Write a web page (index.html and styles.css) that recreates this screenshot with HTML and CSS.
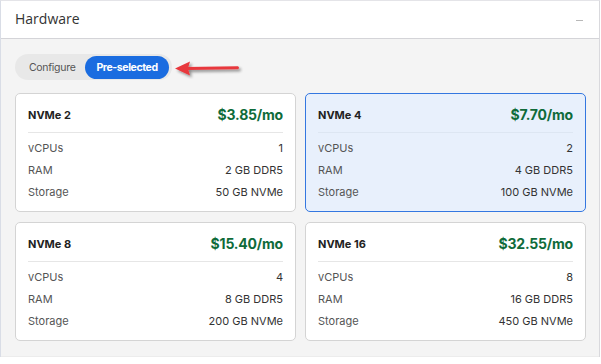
FILE: index.html
```html
<!DOCTYPE html>
<html>
<head>
<meta charset="utf-8">
<link rel="stylesheet" href="styles.css">
</head>
<body>
<div class="panel">
  <div class="panel-header">
    <span class="panel-title">Hardware</span>
    <span class="collapse"></span>
  </div>
  <div class="panel-body">
    <div class="toggle-row">
      <div class="toggle">
        <span class="tab">Configure</span>
        <span class="tab active">Pre-selected</span>
      </div>
      <svg class="arrow" width="72" height="20" viewBox="0 0 72 20">
        <defs>
          <filter id="sh" x="-20%" y="-50%" width="140%" height="200%">
            <feGaussianBlur in="SourceAlpha" stdDeviation="1.5"/>
            <feOffset dx="2" dy="2" result="b"/>
            <feComponentTransfer><feFuncA type="linear" slope="0.45"/></feComponentTransfer>
            <feMerge><feMergeNode/><feMergeNode in="SourceGraphic"/></feMerge>
          </filter>
        </defs>
        <g filter="url(#sh)">
          <path d="M14 8 L65 7.3 Q67 8.8 65 10.3 L14 11 Z" fill="#e8383d"/>
          <path d="M2 9.5 L17 2.5 L15 9.4 L17 16.5 Z" fill="#e8383d"/>
        </g>
      </svg>
    </div>
    <div class="grid">
      <div class="card">
        <div class="card-head"><span class="name">NVMe 2</span><span class="price">$3.85/mo</span></div>
        <div class="row"><span class="label">vCPUs</span><span class="value">1</span></div>
        <div class="row"><span class="label">RAM</span><span class="value">2 GB DDR5</span></div>
        <div class="row"><span class="label">Storage</span><span class="value">50 GB NVMe</span></div>
      </div>
      <div class="card selected">
        <div class="card-head"><span class="name">NVMe 4</span><span class="price">$7.70/mo</span></div>
        <div class="row"><span class="label">vCPUs</span><span class="value">2</span></div>
        <div class="row"><span class="label">RAM</span><span class="value">4 GB DDR5</span></div>
        <div class="row"><span class="label">Storage</span><span class="value">100 GB NVMe</span></div>
      </div>
      <div class="card">
        <div class="card-head"><span class="name">NVMe 8</span><span class="price">$15.40/mo</span></div>
        <div class="row"><span class="label">vCPUs</span><span class="value">4</span></div>
        <div class="row"><span class="label">RAM</span><span class="value">8 GB DDR5</span></div>
        <div class="row"><span class="label">Storage</span><span class="value">200 GB NVMe</span></div>
      </div>
      <div class="card">
        <div class="card-head"><span class="name">NVMe 16</span><span class="price">$32.55/mo</span></div>
        <div class="row"><span class="label">vCPUs</span><span class="value">8</span></div>
        <div class="row"><span class="label">RAM</span><span class="value">16 GB DDR5</span></div>
        <div class="row"><span class="label">Storage</span><span class="value">450 GB NVMe</span></div>
      </div>
    </div>
  </div>
</div>
</body>
</html>
```
FILE: styles.css
```css
* { box-sizing: border-box; }
html, body { margin: 0; padding: 0; background: #ffffff; }
body { font-family: Inter, "Open Sans", "Liberation Sans", sans-serif; width: 601px; height: 364px; overflow: hidden; }

.panel {
  width: 600px;
  border-top: 1px solid #e4e4e8;
  border-left: 1px solid #d9dde6;
  border-right: 1px solid #d9d9dd;
}

.panel-header {
  height: 38px;
  border-bottom: 1px solid #d4d4d8;
  display: flex;
  align-items: center;
  justify-content: space-between;
  padding: 0 14px 0 14px;
  background: #fff;
}
.panel-title {
  font-family: "Open Sans", "Liberation Sans", sans-serif;
  font-size: 14px;
  color: #333;
  margin-top: -2px;
}
.collapse {
  width: 7px;
  height: 1px;
  background: #b8b8b8;
  margin-right: 2px;
  margin-top: 2px;
}

.panel-body {
  background: #f4f4f4;
  padding: 15px 13px 15px 14px;
  border-bottom: 1px solid #ececec;
}

.toggle-row { display: flex; align-items: center; gap: 1px; }
.toggle {
  display: flex;
  align-items: center;
  background: #e8e8e8;
  border-radius: 13px;
  height: 26px;
  padding: 0 3px 0 0;
}
.tab {
  font-size: 10.5px;
  color: #555;
  padding: 0 10px 0 14px;
  letter-spacing: -0.3px;
}
.tab.active {
  background: #1a6ce0;
  color: #fff;
  font-weight: 700;
  height: 23px;
  line-height: 23px;
  border-radius: 12px;
  padding: 0 11px;
  letter-spacing: -0.4px;
}
.arrow { margin-top: 3px; }

.grid {
  margin-top: 13px;
  display: grid;
  grid-template-columns: 281px 281px;
  column-gap: 9px;
  row-gap: 10px;
}
.card {
  background: #fff;
  border: 1px solid #d4d4d4;
  border-radius: 5px;
  height: 119px;
  padding: 11px 12px 0 12px;
}
.card.selected {
  background: #e8f0fc;
  border-color: #3477e0;
}
.card-head {
  display: flex;
  justify-content: space-between;
  align-items: center;
  border-bottom: 1px solid #e6e6e6;
  height: 28px;
  padding-bottom: 8px;
  margin-bottom: 4px;
}
.card.selected .card-head { border-bottom-color: #dde6f2; }
.name { font-size: 11px; font-weight: 700; color: #222; }
.price { font-size: 14px; font-weight: 700; color: #0f6b3a; letter-spacing: -0.2px; }
.row {
  display: flex;
  justify-content: space-between;
  align-items: center;
  height: 22px;
  font-size: 11px;
}
.label { color: #555; }
.value { color: #333; }
```
